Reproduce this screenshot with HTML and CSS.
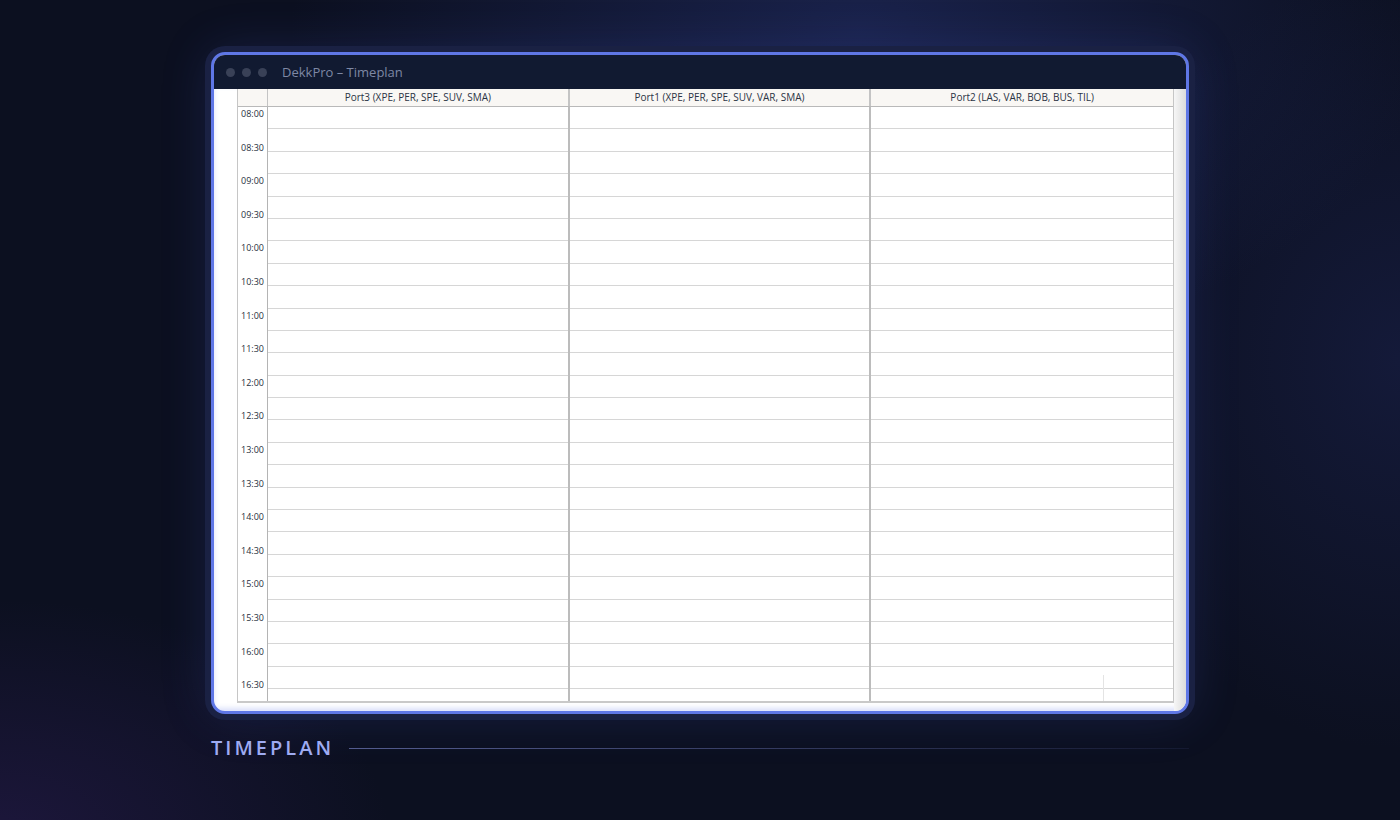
FILE: index.html
```html
<!DOCTYPE html>
<html lang="no">
<head>
  <meta charset="UTF-8">
  <meta name="viewport" content="width=device-width, initial-scale=1.0">
  <title>DekkPro – Timeplan</title>
  <link rel="stylesheet" href="styles.css">
</head>
<body>

  <main class="stage">
    <!-- App window -->
    <section class="window">
      <header class="titlebar">
        <span class="dot"></span>
        <span class="dot"></span>
        <span class="dot"></span>
        <span class="window-title">DekkPro – Timeplan</span>
      </header>

      <div class="window-body">
        <div class="schedule">
          <div class="schedule-head">
            <div class="corner"></div>
            <div class="head-cell">Port3 (XPE, PER, SPE, SUV, SMA)</div>
            <div class="head-cell">Port1 (XPE, PER, SPE, SUV, VAR, SMA)</div>
            <div class="head-cell">Port2 (LAS, VAR, BOB, BUS, TIL)</div>
          </div>
          <div class="schedule-body">
            <div class="times" id="times"></div>
            <div class="lane" data-port="Port3"></div>
            <div class="lane" data-port="Port1"></div>
            <div class="lane" data-port="Port2"></div>
            <span class="resize-mark"></span>
          </div>
        </div>
        <div class="scrollbar"></div>
      </div>
    </section>

    <!-- Caption under the window -->
    <div class="caption">
      <span class="caption-text">TIMEPLAN</span>
      <span class="caption-rule"></span>
    </div>
  </main>

  <script>
    // Half-hour labels from 08:00 to 16:30
    const times = document.getElementById('times');
    for (let m = 8 * 60; m <= 16 * 60 + 30; m += 30) {
      const label = document.createElement('div');
      label.className = 'time';
      const h = String(Math.floor(m / 60)).padStart(2, '0');
      label.textContent = `${h}:${m % 60 === 0 ? '00' : '30'}`;
      times.appendChild(label);
    }

    // Empty booking slots for each port
    document.querySelectorAll('.lane').forEach(lane => {
      for (let i = 0; i < 27; i++) {
        const slot = document.createElement('div');
        slot.className = 'slot';
        lane.appendChild(slot);
      }
    });
  </script>
</body>
</html>
```

FILE: styles.css
```css
* {
  box-sizing: border-box;
}
body {
  margin: 0;
  height: 820px;
  overflow: hidden;
  font-family: "Open Sans", "Noto Sans", sans-serif;
  background:
    radial-gradient(ellipse 760px 440px at 860px 30px, rgba(38, 50, 112, 0.55), transparent 75%),
    radial-gradient(ellipse 420px 520px at 1400px 360px, rgba(30, 38, 88, 0.45), transparent 75%),
    radial-gradient(ellipse 520px 320px at 0 840px, rgba(42, 28, 82, 0.55), transparent 75%),
    #0c1020;
}
.stage {
  display: flex;
  flex-direction: column;
  width: 978px;
  margin-left: 211px;
  padding-top: 52px;
}

/* Window */
.window {
  display: flex;
  flex-direction: column;
  height: 662px;
  border: 3px solid #5f77e6;
  border-radius: 14px;
  overflow: hidden;
  background: #fff;
  box-shadow:
    0 0 0 6px #1a2143,
    0 0 50px rgba(70, 90, 210, 0.22);
}
.titlebar {
  display: flex;
  flex-shrink: 0;
  align-items: center;
  gap: 7px;
  height: 34px;
  padding-left: 12px;
  background: #111a31;
}
.dot {
  width: 9px;
  height: 9px;
  border-radius: 50%;
  background: #394157;
}
.window-title {
  margin-left: 8px;
  font-size: 13px;
  color: #7e88a4;
}
.window-body {
  display: flex;
  flex: 1;
  min-height: 0;
  padding: 0 0 8px 23px;
  box-shadow: inset 0 -3px 5px rgba(110, 130, 235, 0.25);
}

/* Schedule grid */
.schedule {
  flex: 1;
  display: flex;
  flex-direction: column;
  min-height: 0;
  border: 1px solid #c6c6c6;
  border-top: none;
  border-bottom: 2px solid #c9c9c9;
}
.schedule-head,
.schedule-body {
  display: grid;
  grid-template-columns: 30px 1fr 1fr 1fr;
}
.schedule-head {
  flex-shrink: 0;
  height: 18px;
  background: #f9f7f4;
  border-bottom: 1px solid #b9b9b9;
}
.corner,
.head-cell {
  border-right: 1px solid #c4c4c4;
}
.head-cell {
  font-size: 10px;
  font-weight: 500;
  line-height: 17px;
  text-align: center;
  color: #2b3444;
}
.head-cell:nth-child(2),
.head-cell:nth-child(3) {
  border-right: 2px solid #c4c4c4;
}
.head-cell:last-child {
  border-right: none;
}
.schedule-body {
  position: relative;
  flex: 1;
  min-height: 0;
  overflow: hidden;
}
.times {
  border-right: 1px solid #b4b4b4;
}
.time {
  height: 33.6px;
  padding: 1px 0 0 3px;
  font-size: 9px;
  font-weight: 500;
  line-height: 12px;
  color: #27303d;
}
.lane {
  border-right: 2px solid #bcbcbc;
}
.lane:last-of-type {
  border-right: none;
}
.slot {
  height: 22.4px;
  border-bottom: 1px solid #d6d6d6;
}
.resize-mark {
  position: absolute;
  left: 865px;
  bottom: 0;
  width: 1px;
  height: 26px;
  background: #e4e4e4;
}
.scrollbar {
  width: 12px;
  margin-bottom: -8px;
  background: linear-gradient(90deg, #f6f6f6, #dcdcdc);
}

/* Caption */
.caption {
  display: flex;
  align-items: center;
  gap: 15px;
  margin-top: 22px;
}
.caption-text {
  font-size: 20px;
  line-height: 24px;
  font-weight: 600;
  letter-spacing: 3px;
  color: #9eabf2;
}
.caption-rule {
  flex: 1;
  height: 1px;
  background: linear-gradient(90deg, rgba(130, 142, 215, 0.6), rgba(90, 100, 170, 0.12));
}
```
